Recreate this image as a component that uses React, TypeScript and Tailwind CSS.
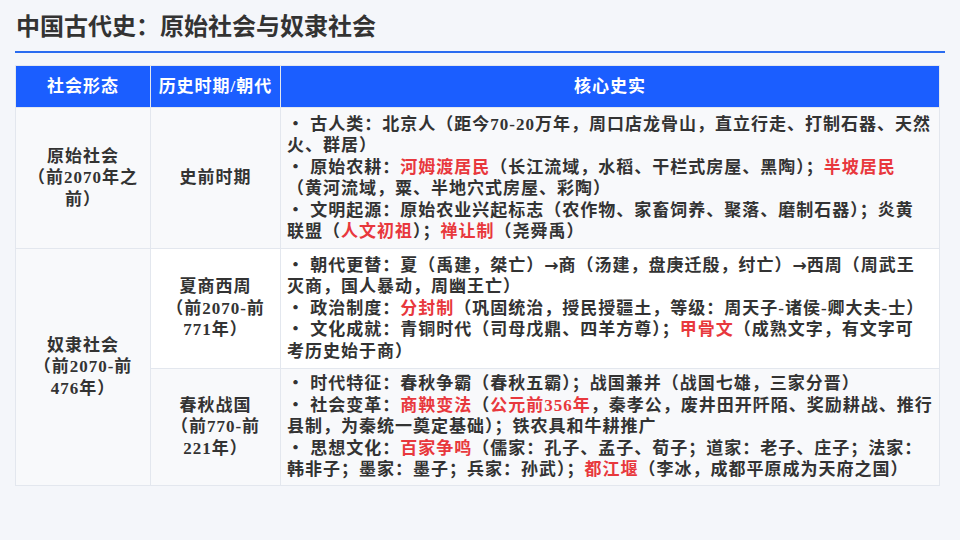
import React from "react";

type Seg = string | { r: string } | { a: true };
type Line = Seg[];

const R = (r: string) => ({ r });
const A = { a: true as const };

const row1: Line[] = [
  ["・ 古人类：北京人（距今70-20万年，周口店龙骨山，直立行走、打制石器、天然"],
  ["火、群居）"],
  ["・ 原始农耕：", R("河姆渡居民"), "（长江流域，水稻、干栏式房屋、黑陶）；", R("半坡居民")],
  ["（黄河流域，粟、半地穴式房屋、彩陶）"],
  ["・ 文明起源：原始农业兴起标志（农作物、家畜饲养、聚落、磨制石器）；炎黄"],
  ["联盟（", R("人文初祖"), "）；", R("禅让制"), "（尧舜禹）"],
];

const row2: Line[] = [
  ["・ 朝代更替：夏（禹建，桀亡）", A, "商（汤建，盘庚迁殷，纣亡）", A, "西周（周武王"],
  ["灭商，国人暴动，周幽王亡）"],
  ["・ 政治制度：", R("分封制"), "（巩固统治，授民授疆土，等级：周天子-诸侯-卿大夫-士）"],
  ["・ 文化成就：青铜时代（司母戊鼎、四羊方尊）；", R("甲骨文"), "（成熟文字，有文字可"],
  ["考历史始于商）"],
];

const row3: Line[] = [
  ["・ 时代特征：春秋争霸（春秋五霸）；战国兼并（战国七雄，三家分晋）"],
  ["・ 社会变革：", R("商鞅变法"), "（", R("公元前356年"), "，秦孝公，废井田开阡陌、奖励耕战、推行"],
  ["县制，为秦统一奠定基础）；铁农具和牛耕推广"],
  ["・ 思想文化：", R("百家争鸣"), "（儒家：孔子、孟子、荀子；道家：老子、庄子；法家："],
  ["韩非子；墨家：墨子；兵家：孙武）；", R("都江堰"), "（李冰，成都平原成为天府之国）"],
];

function Facts({ lines }: { lines: Line[] }) {
  return (
    <div className="flex flex-col">
      {lines.map((line, i) => (
        <div key={i} className="whitespace-nowrap leading-[21.5px]">
          {line.map((s, j) => {
            if (typeof s === "string") return <span key={j}>{s}</span>;
            if ("a" in s)
              return (
                <span key={j} className="font-['DejaVu_Sans',sans-serif] tracking-normal">
                  →
                </span>
              );
            return (
              <span key={j} className="text-[#e8383d]">
                {s.r}
              </span>
            );
          })}
        </div>
      ))}
    </div>
  );
}

function Center({ lines }: { lines: string[] }) {
  return (
    <div className="flex flex-col items-center text-center">
      {lines.map((l, i) => (
        <div key={i} className="whitespace-nowrap leading-[21.5px]">
          {l}
        </div>
      ))}
    </div>
  );
}

export default function App() {
  return (
    <div className="w-[960px] h-[540px] bg-[#f4f6fa] font-['Liberation_Serif','Noto_Sans_CJK_SC',serif] font-bold text-[#333333] overflow-hidden">
      <div className="pl-[16px] pt-[10px]">
        <h1 className="text-[24px] leading-[30px] font-bold text-[#333333] font-['Noto_Sans_CJK_SC',sans-serif]">
          中国古代史：原始社会与奴隶社会
        </h1>
      </div>
      <div className="ml-[15px] mt-[11px] w-[930px] h-[2px] bg-[#2a6cf0]" />
      <div className="ml-[15px] mt-[12px] w-[925px] grid grid-cols-[134px_129px_658px] grid-rows-[41px_140px_119px_116px] gap-px bg-[#e3e7ee] border border-[#e3e7ee] text-[17px] tracking-[1px]">
        <div className="bg-[#1b5eff] text-white flex items-center justify-center">社会形态</div>
        <div className="bg-[#1b5eff] text-white flex items-center justify-center">历史时期/朝代</div>
        <div className="bg-[#1b5eff] text-white flex items-center justify-center">核心史实</div>

        <div className="bg-[#f8f9fb] flex items-center justify-center">
          <Center lines={["原始社会", "（前2070年之", "前）"]} />
        </div>
        <div className="bg-[#f8f9fb] flex items-center justify-center">
          <Center lines={["史前时期"]} />
        </div>
        <div className="bg-[#f8f9fb] flex items-center pl-[6px]">
          <Facts lines={row1} />
        </div>

        <div className="row-span-2 bg-[#f8f9fb] flex items-center justify-center">
          <Center lines={["奴隶社会", "（前2070-前", "476年）"]} />
        </div>
        <div className="bg-white flex items-center justify-center">
          <Center lines={["夏商西周", "（前2070-前", "771年）"]} />
        </div>
        <div className="bg-white flex items-center pl-[6px]">
          <Facts lines={row2} />
        </div>

        <div className="bg-[#f8f9fb] flex items-center justify-center">
          <Center lines={["春秋战国", "（前770-前", "221年）"]} />
        </div>
        <div className="bg-[#f8f9fb] flex items-center pl-[6px]">
          <Facts lines={row3} />
        </div>
      </div>
    </div>
  );
}
